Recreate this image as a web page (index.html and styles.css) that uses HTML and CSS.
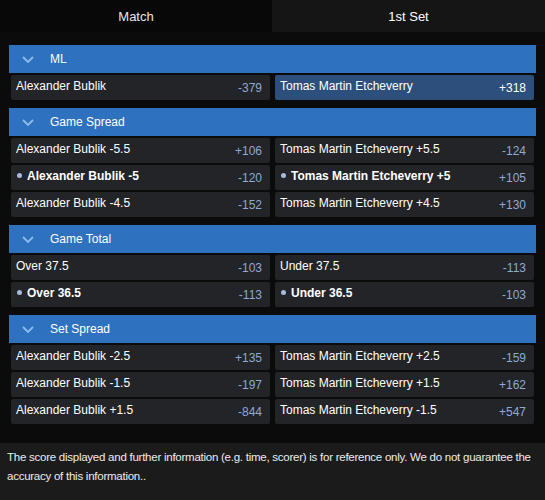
FILE: index.html
```html
<!DOCTYPE html>
<html lang="en">
<head>
  <meta charset="UTF-8" />
  <meta name="viewport" content="width=device-width, initial-scale=1.0" />
  <title>Match Markets</title>
  <link rel="stylesheet" href="styles.css">
</head>
<body>
  <div class="tabs">
    <div class="tab active">Match</div>
    <div class="tab">1st Set</div>
  </div>

  <div class="markets">
    <div class="market">
      <div class="market-head">
        <svg class="chevron" width="12" height="7" viewBox="0 0 12 7"><path d="M1 1l5 5 5-5" /></svg>
        <span>ML</span>
      </div>
      <div class="outcomes">
        <div class="outcome"><span class="name">Alexander Bublik</span><span class="odds">-379</span></div>
        <div class="outcome selected"><span class="name">Tomas Martin Etcheverry</span><span class="odds">+318</span></div>
      </div>
    </div>

    <div class="market">
      <div class="market-head">
        <svg class="chevron" width="12" height="7" viewBox="0 0 12 7"><path d="M1 1l5 5 5-5" /></svg>
        <span>Game Spread</span>
      </div>
      <div class="outcomes">
        <div class="outcome"><span class="name">Alexander Bublik -5.5</span><span class="odds">+106</span></div>
        <div class="outcome"><span class="name">Tomas Martin Etcheverry +5.5</span><span class="odds">-124</span></div>
        <div class="outcome main"><span class="name">Alexander Bublik -5</span><span class="odds">-120</span></div>
        <div class="outcome main"><span class="name">Tomas Martin Etcheverry +5</span><span class="odds">+105</span></div>
        <div class="outcome"><span class="name">Alexander Bublik -4.5</span><span class="odds">-152</span></div>
        <div class="outcome"><span class="name">Tomas Martin Etcheverry +4.5</span><span class="odds">+130</span></div>
      </div>
    </div>

    <div class="market">
      <div class="market-head">
        <svg class="chevron" width="12" height="7" viewBox="0 0 12 7"><path d="M1 1l5 5 5-5" /></svg>
        <span>Game Total</span>
      </div>
      <div class="outcomes">
        <div class="outcome"><span class="name">Over 37.5</span><span class="odds">-103</span></div>
        <div class="outcome"><span class="name">Under 37.5</span><span class="odds">-113</span></div>
        <div class="outcome main"><span class="name">Over 36.5</span><span class="odds">-113</span></div>
        <div class="outcome main"><span class="name">Under 36.5</span><span class="odds">-103</span></div>
      </div>
    </div>

    <div class="market">
      <div class="market-head">
        <svg class="chevron" width="12" height="7" viewBox="0 0 12 7"><path d="M1 1l5 5 5-5" /></svg>
        <span>Set Spread</span>
      </div>
      <div class="outcomes">
        <div class="outcome"><span class="name">Alexander Bublik -2.5</span><span class="odds">+135</span></div>
        <div class="outcome"><span class="name">Tomas Martin Etcheverry +2.5</span><span class="odds">-159</span></div>
        <div class="outcome"><span class="name">Alexander Bublik -1.5</span><span class="odds">-197</span></div>
        <div class="outcome"><span class="name">Tomas Martin Etcheverry +1.5</span><span class="odds">+162</span></div>
        <div class="outcome"><span class="name">Alexander Bublik +1.5</span><span class="odds">-844</span></div>
        <div class="outcome"><span class="name">Tomas Martin Etcheverry -1.5</span><span class="odds">+547</span></div>
      </div>
    </div>
  </div>

  <div class="disclaimer">
    The score displayed and further information (e.g. time, scorer) is for reference only. We do not guarantee the accuracy of this information..
  </div>
</body>
</html>
```

FILE: styles.css
```css
body {
  margin: 0;
  height: 500px;
  overflow: hidden;
  background: #0b0b0b;
  color: #fff;
  font-family: "Liberation Sans", Arial, sans-serif;
  font-size: 12px;
}

.tabs {
  display: grid;
  grid-template-columns: 272px 1fr;
  height: 32px;
}
.tab {
  display: flex;
  align-items: center;
  justify-content: center;
  font-size: 13px;
  color: #fff;
  background: #151515;
}
.tab.active {
  background: #080808;
  color: #e6e6e6;
}

.markets {
  padding: 13px 9px 19px;
}
.market {
  margin-bottom: 8px;
}
.market:last-child {
  margin-bottom: 0;
}

.market-head {
  display: flex;
  align-items: center;
  height: 28px;
  padding-left: 13px;
  padding-bottom: 1px;
  box-sizing: border-box;
  background: #2e72bf;
  font-size: 12px;
}
.chevron {
  margin: 2px 16px 0 0;
  fill: none;
  stroke: #8ebbec;
  stroke-width: 1.8;
}

.outcomes {
  display: grid;
  grid-template-columns: 1fr 1fr;
  gap: 2px 5px;
  padding: 2px 2px 0;
}
.outcome {
  display: flex;
  align-items: center;
  justify-content: space-between;
  height: 25px;
  padding: 0 8px 0 5px;
  background: #232427;
  border-radius: 2px;
}
.outcome .name {
  color: #fff;
  padding-bottom: 4px;
}
.outcome .odds {
  color: #8ea9d6;
}
.outcome.selected {
  background: #2c4f7c;
}
.outcome.selected .odds {
  color: #fff;
}
.outcome.main .name {
  font-weight: bold;
}
.outcome.main .name::before {
  content: "";
  display: inline-block;
  width: 5px;
  height: 5px;
  margin: 0 5px 1px 1px;
  border-radius: 50%;
  background: #a9bbdc;
  vertical-align: middle;
}

.disclaimer {
  background: #1b1b1b;
  color: #ececec;
  font-size: 11.5px;
  line-height: 19px;
  letter-spacing: -0.25px;
  padding: 5px 4px 14px 7px;
  height: 57px;
  box-sizing: border-box;
}
```
